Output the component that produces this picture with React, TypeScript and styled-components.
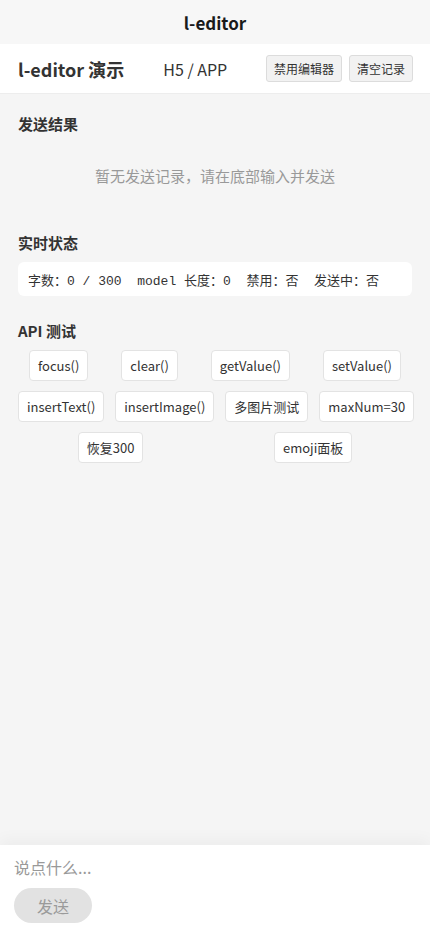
import React from "react";
import styled, { createGlobalStyle } from "styled-components";

const GlobalStyle = createGlobalStyle`
  html, body {
    margin: 0;
    padding: 0;
    background: #f5f5f5;
    font-family: "Noto Sans CJK SC", "Noto Sans", sans-serif;
    color: #333;
  }
  * { box-sizing: border-box; }
`;

const Page = styled.div`
  min-height: 100vh;
  display: flex;
  flex-direction: column;
  background: #f5f5f5;
`;

const NavBar = styled.div`
  height: 44px;
  display: flex;
  align-items: center;
  justify-content: center;
  background: #f7f7f7;
  font-size: 17px;
  font-weight: 700;
  color: #1a1a1a;
`;

const Header = styled.div`
  height: 50px;
  display: flex;
  align-items: center;
  padding: 0 17px 0 18px;
  background: #fff;
  border-bottom: 1px solid #ededed;
`;

const HeaderTitle = styled.div`
  font-size: 18px;
  font-weight: 700;
  color: #333;
`;

const HeaderSub = styled.div`
  margin-left: 39px;
  font-size: 16px;
  color: #333;
`;

const HeaderActions = styled.div`
  margin-left: auto;
  display: flex;
  gap: 7px;
`;

const SmallButton = styled.button`
  height: 27px;
  padding: 0 7px;
  border: 1px solid #dcdcdc;
  border-radius: 3px;
  background: #f2f2f2;
  font-family: inherit;
  font-size: 12px;
  color: #333;
  line-height: 1;
`;

const Main = styled.div`
  flex: 1;
  padding: 20px 18px;
`;

const Section = styled.div<{ $gap?: number }>`
  margin-top: ${(p) => p.$gap ?? 0}px;
`;

const SectionTitle = styled.div`
  font-size: 15px;
  font-weight: 700;
  line-height: 20px;
  color: #333;
  margin-bottom: 9px;
`;

const Empty = styled.div`
  padding: 23px 0 32px;
  text-align: center;
  font-size: 15px;
  line-height: 20px;
  color: #999;
`;

const StatusBox = styled.div`
  height: 34px;
  display: flex;
  align-items: center;
  padding: 0 10px;
  background: #fff;
  border-radius: 6px;
  font-family: "Liberation Mono", "Noto Sans CJK SC", monospace;
  font-size: 13px;
  color: #333;
  white-space: pre;
`;

const ApiGrid = styled.div`
  display: flex;
  flex-direction: column;
  gap: 10px;
`;

const ApiRow = styled.div`
  display: flex;
  justify-content: space-around;
  gap: 11px;
`;

const ApiButton = styled.button`
  height: 31px;
  padding: 0 8px;
  border: 1px solid #e3e3e3;
  border-radius: 4px;
  background: #fff;
  font-family: inherit;
  font-size: 13px;
  color: #333;
  line-height: 1;
  white-space: nowrap;
`;

const Composer = styled.div`
  background: #fff;
  padding: 11px 14px 9px;
  box-shadow: 0 -6px 14px rgba(0, 0, 0, 0.035);
  display: flex;
  flex-direction: column;
  align-items: flex-start;
`;

const Placeholder = styled.div`
  font-size: 16px;
  line-height: 22px;
  color: #999;
`;

const SendButton = styled.button`
  margin-top: 10px;
  width: 78px;
  height: 35px;
  border: none;
  border-radius: 18px;
  background: #e2e2e2;
  font-family: inherit;
  font-size: 16px;
  color: #9a9a9a;
`;

const apiRows = [
  ["focus()", "clear()", "getValue()", "setValue()"],
  ["insertText()", "insertImage()", "多图片测试", "maxNum=30"],
  ["恢复300", "emoji面板"],
];

export default function App() {
  return (
    <Page>
      <GlobalStyle />
      <NavBar>l-editor</NavBar>
      <Header>
        <HeaderTitle>l-editor 演示</HeaderTitle>
        <HeaderSub>H5 / APP</HeaderSub>
        <HeaderActions>
          <SmallButton>禁用编辑器</SmallButton>
          <SmallButton>清空记录</SmallButton>
        </HeaderActions>
      </Header>
      <Main>
        <Section>
          <SectionTitle>发送结果</SectionTitle>
          <Empty>暂无发送记录，请在底部输入并发送</Empty>
        </Section>
        <Section $gap={15}>
          <SectionTitle>实时状态</SectionTitle>
          <StatusBox>{"字数：0 / 300  model 长度：0  禁用：否  发送中：否"}</StatusBox>
        </Section>
        <Section $gap={25}>
          <SectionTitle>API 测试</SectionTitle>
          <ApiGrid>
            {apiRows.map((row, i) => (
              <ApiRow key={i}>
                {row.map((a) => (
                  <ApiButton key={a}>{a}</ApiButton>
                ))}
              </ApiRow>
            ))}
          </ApiGrid>
        </Section>
      </Main>
      <Composer>
        <Placeholder>说点什么...</Placeholder>
        <SendButton>发送</SendButton>
      </Composer>
    </Page>
  );
}
